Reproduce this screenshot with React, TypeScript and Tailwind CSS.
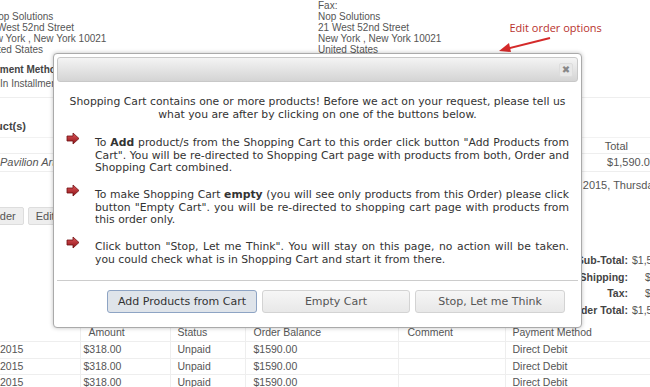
import React from "react";

const bg = { fontFamily: '"Liberation Sans", Arial, sans-serif' };
const dlg = { fontFamily: '"DejaVu Sans", Verdana, sans-serif' };

function RedArrow() {
  return (
    <svg viewBox="0 0 14 13" className="h-[13px] w-[14px] shrink-0">
      <defs>
        <linearGradient id="ra" x1="0" y1="0" x2="0" y2="1">
          <stop offset="0" stopColor="#e0565a" />
          <stop offset="1" stopColor="#8e1418" />
        </linearGradient>
      </defs>
      <path d="M1 4h6V1l6 5.5-6 5.5V9H1z" fill="url(#ra)" stroke="#6e1013" strokeWidth="0.8" />
    </svg>
  );
}

const rows = [1, 2, 3];

const totals = [
  ["Sub-Total:", "$1,590.00", ""],
  ["Shipping:", "$0.00", "pl-[13px]"],
  ["Tax:", "$0.00", "pl-[13px]"],
  ["Order Total:", "$1,590.00", ""],
];

export default function App() {
  return (
    <div className="relative h-[387px] w-[650px] overflow-hidden bg-white text-[10px] leading-[11px] text-[#555]" style={bg}>
      {/* page behind the dialog */}
      <div className="flex">
        <div className="ml-[-17px] w-[335px]">
          <div className="h-[11px]" />
          <div className="pl-[8px]">Nop Solutions</div>
          <div>21 West 52nd Street</div>
          <div>New York , New York 10021</div>
          <div>United States</div>
        </div>
        <div>
          <div>Fax:</div>
          <div>Nop Solutions</div>
          <div>21 West 52nd Street</div>
          <div>New York , New York 10021</div>
          <div>United States</div>
        </div>
        <div className="ml-[68px] mt-[22px]">
          <span className="text-[11px] text-[#b8322d]" style={{ fontFamily: '"Open Sans", sans-serif' }}>
            Edit order options
          </span>
        </div>
      </div>

      <div className="ml-[-18px] mt-[9px] font-bold text-[#444]">Payment Method</div>
      <div className="ml-[-20px] mt-[3px]">Pay In Installments</div>
      <div className="mt-[8px] border-t border-[#eee]" />

      <div className="ml-[-29px] mt-[23px] text-[11px] font-bold text-[#444]">Product(s)</div>
      <div className="mt-[5px] border-t border-[#f2f2f2]" />
      <div className="mt-[3px] flex justify-end">
        <div className="mr-[22px] text-[11px]">Total</div>
      </div>
      <div className="mt-[1px] border-t border-[#eee]" />
      <div className="flex justify-between pt-[3px] text-[11px]">
        <div className="ml-[-22px] italic">The Pavilion Artist</div>
        <div className="mr-[-6px]">$1,590.00</div>
      </div>
      <div className="mt-[3px] border-t border-[#eee]" />
      <div className="mt-[8px] flex justify-end text-[11px]">
        <span className="mr-[-9px]">May 2015, Thursday</span>
      </div>

      <div className="mt-[16px] flex gap-[4px] text-[11px]">
        <span className="ml-[-40px] flex h-[18px] items-center rounded-[2px] border border-[#ddd] bg-[#eee] px-[7px] text-[#555]">
          Edit order
        </span>
        <span className="flex h-[18px] items-center rounded-[2px] border border-[#ddd] bg-[#eee] px-[7px] text-[#555]">
          Edit items
        </span>
      </div>

      <div className="mt-[30px] flex flex-col items-end gap-[5.5px] text-[10.5px] font-bold text-[#444]">
        {totals.map(([l, v, p]) => (
          <div key={l} className="mr-[-36px] flex">
            <span className="w-[80px] text-right">{l}</span>
            <span className={"ml-[4px] w-[54px] text-left font-normal text-[#555] " + p}>{v}</span>
          </div>
        ))}
      </div>

      <table className="mt-[9px] w-[700px] border-collapse text-[10.5px]">
        <tbody>
          <tr className="h-[17px] border-b border-[#eee] text-[#555]">
            <td className="w-[80px]" />
            <td className="w-[90px] border-l border-[#eee] pl-[8px]">Amount</td>
            <td className="w-[75px] border-l border-[#eee] pl-[7px]">Status</td>
            <td className="w-[153px] border-l border-[#eee] pl-[8px]">Order Balance</td>
            <td className="w-[107px] border-l border-[#eee] pl-[9px]">Comment</td>
            <td className="border-l border-[#eee] pl-[7px]">Payment Method</td>
          </tr>
          {rows.map((r) => (
            <tr key={r} className="h-[16.5px] border-b border-[#eee]">
              <td>2015</td>
              <td className="border-l border-[#eee] pl-[3px]">$318.00</td>
              <td className="border-l border-[#eee] pl-[7px]">Unpaid</td>
              <td className="border-l border-[#eee] pl-[8px]">$1590.00</td>
              <td className="border-l border-[#eee]" />
              <td className="border-l border-[#eee] pl-[7px]">Direct Debit</td>
            </tr>
          ))}
        </tbody>
      </table>

      {/* annotation arrow */}
      <svg className="absolute left-[498px] top-[36px] h-[18px] w-[54px]" viewBox="0 0 54 18">
        <line x1="52" y1="2" x2="8" y2="13" stroke="#d42a2a" strokeWidth="2" />
        <path d="M1 15l10-8 2 9z" fill="#d42a2a" />
      </svg>

      {/* dialog */}
      <div
        className="absolute left-[53px] top-[53px] flex h-[275px] w-[529px] flex-col rounded-[4px] border border-[#aaa] bg-white p-[3px] text-[#333] shadow-[0_0_4px_rgba(0,0,0,0.25)]"
        style={dlg}
      >
        <div className="flex h-[25px] shrink-0 items-center justify-end rounded-[3px] border border-[#c8c8c8] bg-gradient-to-b from-[#f4f4f4] to-[#d4d4d4] pr-[4px]">
          <div className="flex h-[14px] w-[14px] items-center justify-center rounded-[2px] border border-[#ddd] bg-[#e8e8e8] text-[10px] leading-none text-[#888]">
            ✖
          </div>
        </div>

        <div className="flex flex-1 flex-col px-[5px] pt-[14px] text-[10.8px] leading-[12.5px]">
          <p className="text-center">
            Shopping Cart contains one or more products! Before we act on your request, please tell us
            <br />
            what you are after by clicking on one of the buttons below.
          </p>

          <div className="mt-[16px] flex flex-col gap-[14.5px]">
            <div className="flex">
              <div className="ml-[4px] mt-[-5px] w-[29px]">
                <RedArrow />
              </div>
              <p className="w-[474px] text-justify">
                To <b>Add</b> product/s from the Shopping Cart to this order click button "Add Products from Cart". You will be re-directed to Shopping Cart page with products from both, Order and Shopping Cart combined.
              </p>
            </div>
            <div className="flex">
              <div className="ml-[4px] mt-[-5px] w-[29px]">
                <RedArrow />
              </div>
              <p className="w-[474px] text-justify">
                To make Shopping Cart <b>empty</b> (you will see only products from this Order) please click button "Empty Cart". you will be re-directed to shopping cart page with products from this order only.
              </p>
            </div>
            <div className="flex">
              <div className="ml-[4px] mt-[-5px] w-[29px]">
                <RedArrow />
              </div>
              <p className="w-[474px] text-justify">
                Click button "Stop, Let me Think". You will stay on this page, no action will be taken. you could check what is in Shopping Cart and start it from there.
              </p>
            </div>
          </div>
        </div>

        <div className="flex h-[44px] shrink-0 items-start justify-end gap-[5px] border-t border-[#ccc] pr-[13px] pt-[9px] text-[11px]">
          <button className="h-[23px] w-[150px] rounded-[3px] border border-[#8ea4c4] bg-[#dfe4ea] text-[#333]">
            Add Products from Cart
          </button>
          <button className="h-[23px] w-[148px] rounded-[3px] border border-[#d3d3d3] bg-gradient-to-b from-[#f6f6f6] to-[#e8e8e8] text-[#555]">
            Empty Cart
          </button>
          <button className="h-[23px] w-[150px] rounded-[3px] border border-[#d3d3d3] bg-gradient-to-b from-[#f6f6f6] to-[#e8e8e8] text-[#555]">
            Stop, Let me Think
          </button>
        </div>
      </div>
    </div>
  );
}
